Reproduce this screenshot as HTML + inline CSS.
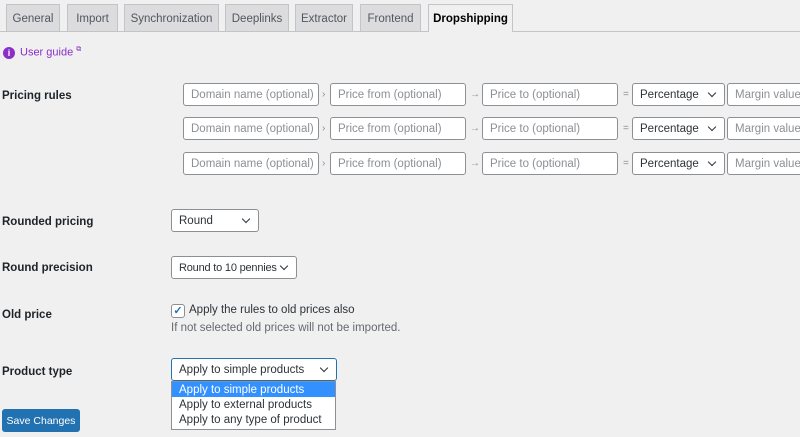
<!DOCTYPE html>
<html><head><style>
*{box-sizing:border-box;margin:0;padding:0}
body{width:800px;height:437px;background:#f0f0f1;font-family:"Liberation Sans",sans-serif;font-size:11.5px;color:#1d2327;position:relative;overflow:hidden}
.a{position:absolute}
.tab{position:absolute;top:4px;height:27px;background:#dcdcde;border:1px solid #c3c4c7;border-bottom:none;color:#50575e;font-size:11.5px;line-height:28px;text-align:center}
.tab.on{background:#f0f0f1;color:#000;height:28px;font-weight:bold}
.line{position:absolute;left:0;top:31px;width:800px;height:1px;background:#c3c4c7}
.in{position:absolute;height:23px;background:#fff;border:1px solid #8c8f94;border-radius:3px;color:#8c8f94;line-height:23px;padding-left:7px;white-space:nowrap;overflow:hidden}
.sel{position:absolute;height:23px;background:#fff;border:1px solid #8c8f94;border-radius:3px;color:#2c3338;line-height:23px;padding-left:7px;white-space:nowrap}
.sel:after{content:"";position:absolute;right:9px;top:6px;width:5px;height:5px;border-right:1.5px solid #2c3338;border-bottom:1.5px solid #2c3338;transform:rotate(45deg)}
.sep{position:absolute;color:#8c8f94;font-size:10px}
.lbl{position:absolute;left:2px;font-weight:bold;color:#1d2327}
</style></head><body>
<div class="tab" style="left:6px;width:54px">General</div>
<div class="tab" style="left:67px;width:51px">Import</div>
<div class="tab" style="left:124px;width:95px">Synchronization</div>
<div class="tab" style="left:225px;width:64px">Deeplinks</div>
<div class="tab" style="left:295px;width:58px">Extractor</div>
<div class="tab" style="left:360px;width:61px">Frontend</div>
<div class="line"></div>
<div class="tab on" style="left:428px;width:85px">Dropshipping</div>

<div class="a" style="left:3px;top:47px;width:12px;height:12px;border-radius:50%;background:#8b2fc9;color:#fff;font-size:9px;font-weight:bold;text-align:center;line-height:12px">i</div>
<div class="a" style="left:20px;top:46px;color:#8b2fc9;font-size:11px">User guide <sup style="font-size:7px">⧉</sup></div>

<div class="lbl" style="top:90px">Pricing rules</div>

<div class="in" style="left:183px;top:83px;width:136px">Domain name (optional)</div>
<div class="sep" style="left:322px;top:89px">›</div>
<div class="in" style="left:330px;top:83px;width:136px">Price from (optional)</div>
<div class="sep" style="left:470px;top:89px">→</div>
<div class="in" style="left:482px;top:83px;width:136px">Price to (optional)</div>
<div class="sep" style="left:623px;top:89px">=</div>
<div class="sel" style="left:632px;top:83px;width:93px">Percentage</div>
<div class="in" style="left:727px;top:83px;width:80px">Margin value</div>

<div class="in" style="left:183px;top:117px;width:136px">Domain name (optional)</div>
<div class="sep" style="left:322px;top:123px">›</div>
<div class="in" style="left:330px;top:117px;width:136px">Price from (optional)</div>
<div class="sep" style="left:470px;top:123px">→</div>
<div class="in" style="left:482px;top:117px;width:136px">Price to (optional)</div>
<div class="sep" style="left:623px;top:123px">=</div>
<div class="sel" style="left:632px;top:117px;width:93px">Percentage</div>
<div class="in" style="left:727px;top:117px;width:80px">Margin value</div>

<div class="in" style="left:183px;top:152px;width:136px">Domain name (optional)</div>
<div class="sep" style="left:322px;top:158px">›</div>
<div class="in" style="left:330px;top:152px;width:136px">Price from (optional)</div>
<div class="sep" style="left:470px;top:158px">→</div>
<div class="in" style="left:482px;top:152px;width:136px">Price to (optional)</div>
<div class="sep" style="left:623px;top:158px">=</div>
<div class="sel" style="left:632px;top:152px;width:93px">Percentage</div>
<div class="in" style="left:727px;top:152px;width:80px">Margin value</div>

<div class="lbl" style="top:216px">Rounded pricing</div>
<div class="sel" style="left:171px;top:209px;width:88px">Round</div>
<div class="lbl" style="top:262px">Round precision</div>
<div class="sel" style="left:171px;top:256px;width:126px;font-size:11px;letter-spacing:-0.2px">Round to 10 pennies</div>
<div class="lbl" style="top:309px">Old price</div>
<div class="a" style="left:171px;top:304px;width:14px;height:14px;background:#fff;border:1px solid #8c8f94;border-radius:3px;color:#2271b1;font-size:11px;line-height:12px;text-align:center;font-weight:bold">✓</div>
<div class="a" style="left:189px;top:304px;color:#2c3338">Apply the rules to old prices also</div>
<div class="a" style="left:171px;top:322px;color:#646970">If not selected old prices will not be imported.</div>

<div class="lbl" style="top:366px">Product type</div>
<div class="sel" style="left:171px;top:358px;width:166px;border-color:#2271b1">Apply to simple products</div>
<div class="a" style="left:171px;top:381px;width:165px;height:49px;background:#fff;border:1px solid #8c8f94;color:#2c3338">
<div style="background:#3390ff;color:#fff;height:15px;line-height:16px;padding-left:7px">Apply to simple products</div>
<div style="height:15px;line-height:16px;padding-left:7px">Apply to external products</div>
<div style="height:15px;line-height:16px;padding-left:7px">Apply to any type of product</div>
</div>
<div class="a" style="left:2px;top:409px;width:78px;height:23px;background:#2271b1;border-radius:3px;color:#fff;font-size:10.5px;line-height:24px;text-align:center">Save Changes</div>
</body></html>
